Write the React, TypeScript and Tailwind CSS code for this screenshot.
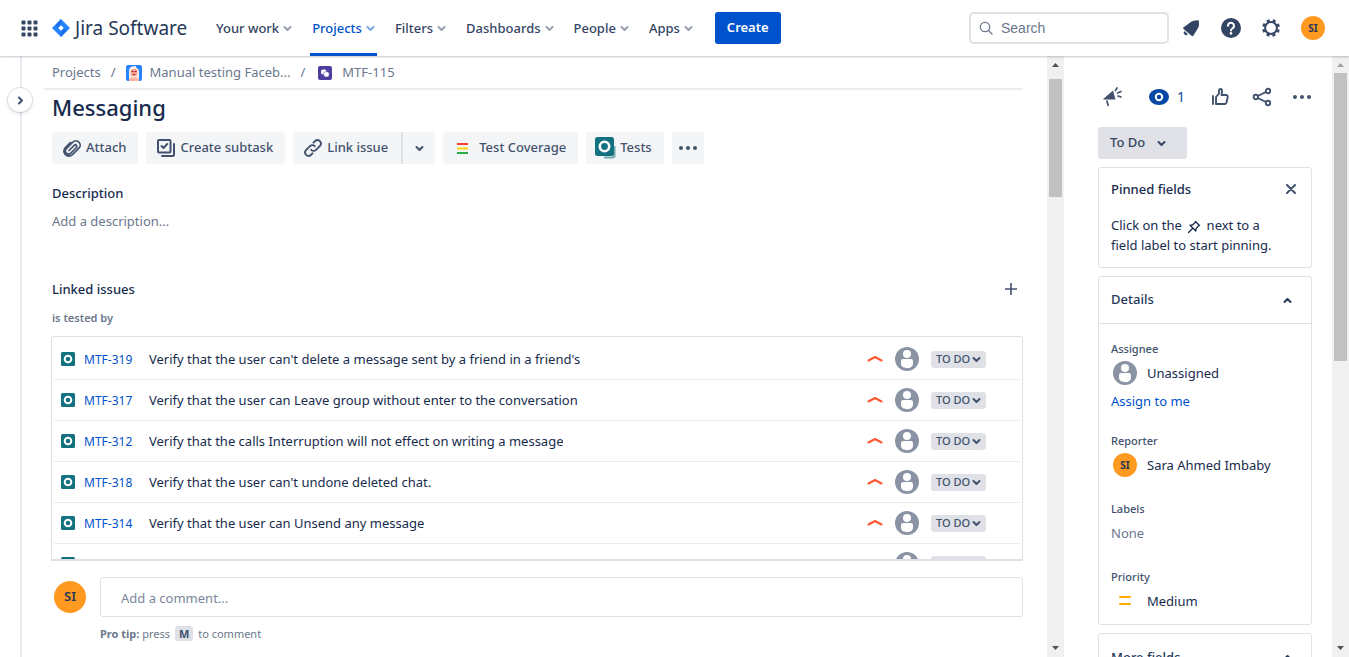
import type { ReactNode } from "react";

const navItems = ["Your work", "Projects", "Filters", "Dashboards", "People", "Apps"];

const linkedIssues = [
  { id: "MTF-319", title: "Verify that the user can't delete a message sent by a friend in a friend's" },
  { id: "MTF-317", title: "Verify that the user can Leave group without enter to the conversation" },
  { id: "MTF-312", title: "Verify that the calls Interruption will not effect on writing a message" },
  { id: "MTF-318", title: "Verify that the user can't undone deleted chat." },
  { id: "MTF-314", title: "Verify that the user can Unsend any message" },
  { id: "MTF-316", title: "" },
];

function Chevron({ className = "", dir = "down" }: { className?: string; dir?: "down" | "up" | "right" }) {
  const d = dir === "down" ? "M1.5 3l3 3 3-3" : dir === "up" ? "M1.5 6l3-3 3 3" : "M3 1.5l3 3-3 3";
  return (
    <svg className={`size-[9px] shrink-0 ${className}`} viewBox="0 0 9 9" fill="none" stroke="currentColor" strokeWidth="2" strokeLinecap="round" strokeLinejoin="round" aria-hidden="true">
      <path d={d} />
    </svg>
  );
}

function Person() {
  return (
    <svg className="size-6 shrink-0" viewBox="0 0 24 24" aria-hidden="true">
      <circle cx="12" cy="12" r="12" fill="#8993A4" />
      <circle cx="12" cy="7" r="4" fill="#fff" />
      <path d="M6 14.200a2.200 2.200 0 0 1 2.200-2.200h7.600a2.200 2.200 0 0 1 2.200 2.200v2.300c0 3-2.600 4.700-6 4.700s-6-1.700-6-4.700z" fill="#fff" />
    </svg>
  );
}

function TestIcon() {
  return (
    <svg className="size-[14px] shrink-0" viewBox="0 0 14 14" aria-hidden="true">
      <rect width="14" height="14" rx="1.500" fill="#14717F" />
      <circle cx="7" cy="7" r="3.300" fill="none" stroke="#fff" strokeWidth="2" />
    </svg>
  );
}

function Dots() {
  return (
    <svg className="h-4 w-5" viewBox="0 0 20 16" fill="currentColor" aria-hidden="true">
      <circle cx="3" cy="8" r="2" />
      <circle cx="10" cy="8" r="2" />
      <circle cx="17" cy="8" r="2" />
    </svg>
  );
}

function ScrollBar({ thumb, upColor }: { thumb: string; upColor: string }) {
  return (
    <div className="flex w-[17px] shrink-0 flex-col items-center bg-[#f0f0f0]" aria-hidden="true">
      <svg className={`size-[17px] ${upColor}`} viewBox="0 0 17 17" fill="currentColor"><path d="M5 11h7L8.500 7z" /></svg>
      <div className={`w-[13px] bg-[#c1c1c1] ${thumb}`} />
      <svg className="mt-auto size-[17px] text-[#505050]" viewBox="0 0 17 17" fill="currentColor"><path d="M5 6h7l-3.500 4z" /></svg>
    </div>
  );
}

function ActionButton({ children, className = "" }: { children: ReactNode; className?: string }) {
  return (
    <button type="button" className={`flex h-8 items-center rounded-[3px] bg-[#F4F5F7] text-[13px] font-medium text-[#42526E] ${className}`}>
      {children}
    </button>
  );
}

function Header() {
  return (
    <header className="relative z-10 flex h-14 shrink-0 items-center bg-white pr-6 pl-[21px] shadow-[0_1px_2px_rgba(9,30,66,0.25)]">
      <button type="button" aria-label="Switch to" className="text-[#344563]">
        <svg className="size-[17px]" viewBox="0 0 17 17" fill="currentColor">
          {[0, 6, 12].map((y) => [0, 6, 12].map((x) => <rect key={`${x}-${y}`} x={x + 0.5} y={y + 0.5} width="4" height="4" rx="1" />))}
        </svg>
      </button>
      <a href="#home" className="ml-[14px] flex w-[135px] items-center text-[19px] whitespace-nowrap text-[#253858]">
        <svg className="mr-[5px] size-[18px] shrink-0" viewBox="0 0 18 18" aria-hidden="true">
          <path d="M9 0l8.500 8.400a.9.9 0 0 1 0 1.200L9 18 .5 9.600a.9.900 0 0 1 0-1.200z" fill="#2684FF" />
          <path d="M9 0v6L6 9 3.500 6z" fill="#1261D8" opacity=".6" />
          <path d="M9 18v-6l3-3 2.500 3z" fill="#1261D8" opacity=".6" />
          <path d="M9 6.200L11.800 9 9 11.800 6.200 9z" fill="#fff" />
        </svg>
        Jira Software
      </a>
      <nav className="ml-[19px] flex h-full">
        {navItems.map((item) => {
          const active = item === "Projects";
          return (
            <button
              key={item}
              type="button"
              className={`mx-2 flex h-full items-center gap-1 border-b-[3px] px-[2px] pt-1 text-[13px] font-medium whitespace-nowrap ${active ? "border-[#0052CC] text-[#0052CC]" : "border-transparent text-[#344563]"}`}
            >
              {item}
              <Chevron className="opacity-50" />
            </button>
          );
        })}
      </nav>
      <button type="button" className="ml-3 h-8 rounded-[3px] bg-[#0052CC] px-3 text-[13px] font-semibold text-white">Create</button>
      <label className="ml-auto flex h-8 w-[200px] items-center gap-2 rounded-[5px] border-2 border-[#DFE1E6] px-2 text-[#6B778C]">
        <svg className="size-[14px] shrink-0" viewBox="0 0 14 14" fill="none" stroke="currentColor" strokeWidth="1.300" strokeLinecap="round" aria-hidden="true">
          <circle cx="6" cy="6" r="4.700" />
          <path d="M9.500 9.500L13 13" />
        </svg>
        <input aria-label="Search" placeholder="Search" className="w-full min-w-0 font-['Liberation_Sans',sans-serif] text-sm outline-none placeholder:text-[#6B778C]" />
      </label>
      <div className="ml-[10px] flex items-center gap-4 text-[#344563]">
        <button type="button" aria-label="Notifications" className="flex size-6 items-center justify-center">
          <svg className="size-[18px]" viewBox="0 0 18 18" fill="currentColor">
            <path d="M16.900 2.200c0-.7-.4-1.100-1.100-1l-3 .2c-1.400.1-2.500.5-3.600 1.300L1.700 8.300c-.9.600-.8 1.200-.1 1.700l8.200 7c.7.500 1.300.4 1.600-.5l4.600-7.300c.7-1.100 1-2.200 1-3.600z" />
            <path d="M2.300 12a2.300 2.300 0 0 0 3.600 3.200z" />
          </svg>
        </button>
        <button type="button" aria-label="Help" className="flex size-6 items-center justify-center">
          <svg className="size-5" viewBox="0 0 20 20">
            <circle cx="10" cy="10" r="10" fill="currentColor" />
            <path d="M7 7.800a3 3 0 1 1 4.700 2.400c-1.100.8-1.700 1.200-1.700 2.400" fill="none" stroke="#fff" strokeWidth="2" strokeLinecap="round" />
            <circle cx="10" cy="15.400" r="1.300" fill="#fff" />
          </svg>
        </button>
        <button type="button" aria-label="Settings" className="flex size-6 items-center justify-center">
          <svg className="size-[18px]" viewBox="0 0 18 18" fill="none" stroke="currentColor">
            <circle cx="9" cy="9" r="5.900" strokeWidth="2" />
            <circle cx="9" cy="9" r="7.700" strokeWidth="2.400" strokeDasharray="3.024 3.024" strokeDashoffset="-1.500" />
          </svg>
        </button>
        <button type="button" aria-label="Your profile" className="ml-[2px] size-6 rounded-full bg-[#FF991F] text-[10px] font-bold text-[#253858]">SI</button>
      </div>
    </header>
  );
}

function Breadcrumbs() {
  return (
    <nav aria-label="Breadcrumbs" className="-ml-2 flex h-[34px] shrink-0 items-center border-b-2 border-[#EBECF0] pt-[2px] pl-2 text-[13px] text-[#6B778C]">
      <a href="#projects">Projects</a>
      <span className="mx-[10px]">/</span>
      <a href="#project" className="flex items-center gap-2">
        <svg className="size-4" viewBox="0 0 16 16" aria-hidden="true">
          <rect width="16" height="16" rx="2" fill="#2684FF" />
          <path d="M3 16V6a5 5 0 0 1 4-4.800L10 1v1.500A5 5 0 0 1 13 7v9z" fill="#FFEDE8" />
          <rect x="4.800" y="4" width="6.400" height="7.200" rx="2.500" fill="#FF9C8A" />
          <path d="M5.500 6.500h2M8.600 6.500h2M7 9.500h2" stroke="#8C3040" strokeWidth="1" />
          <path d="M3 16v-1.500C3 13 5 12.500 8 12.500s5 .5 5 2V16z" fill="#FFB3A2" />
        </svg>
        Manual testing Faceb...
      </a>
      <span className="mx-[10px]">/</span>
      <a href="#issue" className="ml-[3px] flex items-center gap-[10px]">
        <svg className="size-[14px]" viewBox="0 0 14 14" aria-hidden="true">
          <rect width="14" height="14" rx="2" fill="#4C3F9E" />
          <rect x="3" y="3.500" width="5.500" height="5" rx="2" fill="#fff" />
          <rect x="5.700" y="5.700" width="5.500" height="5.300" rx="2" fill="#fff" stroke="#4C3F9E" strokeWidth=".6" />
        </svg>
        MTF-115
      </a>
    </nav>
  );
}

function Actions() {
  return (
    <div className="mt-[10px] flex gap-2">
      <ActionButton className="gap-1 pr-3 pl-[10px]">
        <svg className="size-5" viewBox="0 0 20 20" fill="none" stroke="currentColor" strokeWidth="1.700" strokeLinecap="round" aria-hidden="true">
          <path d="M7 12.500l5.200-5.200a1.500 1.500 0 0 1 2.200 2.200l-5.600 5.600a3.100 3.100 0 0 1-4.500-4.500l6.500-6.500a4.300 4.300 0 0 1 6.100 6.100l-6.500 6.500c-2 2-5 2-7 0s-2-5 0-7l5-5" />
        </svg>
        Attach
      </ActionButton>
      <ActionButton className="gap-1 pr-3 pl-[10px]">
        <svg className="size-5" viewBox="0 0 20 20" fill="none" stroke="currentColor" strokeWidth="2" strokeLinecap="round" strokeLinejoin="round" aria-hidden="true">
          <rect x="2" y="2" width="12.500" height="12.500" rx="1" />
          <path d="M5.500 8l2 2 3.700-4M18 6v10.500a1.500 1.500 0 0 1-1.500 1.500H6" />
        </svg>
        Create subtask
      </ActionButton>
      <div className="flex">
        <ActionButton className="gap-1 rounded-r-none pr-[13px] pl-[10px]">
          <svg className="size-5" viewBox="0 0 20 20" fill="none" stroke="currentColor" strokeWidth="1.900" strokeLinecap="round" aria-hidden="true">
            <path d="M8.200 11.800a3.400 3.400 0 0 0 4.800 0l4-4a3.400 3.400 0 0 0-4.800-4.800l-1.700 1.700" />
            <path d="M11.800 8.200a3.400 3.400 0 0 0-4.800 0l-4 4a3.400 3.400 0 0 0 4.800 4.800l1.700-1.700" />
          </svg>
          Link issue
        </ActionButton>
        <button type="button" aria-label="Link options" className="flex h-8 w-[34px] items-center justify-center rounded-r-[3px] border-l-2 border-[#DFE1E6] bg-[#F4F5F7] text-[#42526E]">
          <Chevron />
        </button>
      </div>
      <ActionButton className="gap-2 px-3">
        <svg className="size-4" viewBox="0 0 16 16" aria-hidden="true">
          <path d="M2 3h11v2H2z" fill="#FF3B30" />
          <path d="M2 7.500h11v2H2z" fill="#FFD60A" />
          <path d="M2 12h11v2H2z" fill="#27AE46" />
        </svg>
        Test Coverage
      </ActionButton>
      <ActionButton className="gap-1 pr-3 pl-2">
        <svg className="size-[22px]" viewBox="0 0 22 22" aria-hidden="true">
          <path d="M10 20.500h8.500a2 2 0 0 0 2-2V9" fill="none" stroke="#71AAB1" strokeWidth="2" />
          <rect x="1" y="0" width="19" height="19" rx="2.500" fill="#14717F" />
          <circle cx="10.500" cy="9.500" r="4.700" fill="none" stroke="#fff" strokeWidth="2.600" />
        </svg>
        Tests
      </ActionButton>
      <ActionButton className="px-[6px]"><Dots /></ActionButton>
    </div>
  );
}

function IssueMain() {
  return (
    <main className="flex min-w-0 flex-1 flex-col pr-6 pl-[30px]">
      <Breadcrumbs />
      <h1 className="mt-[2px] text-[22px] leading-[30px] font-medium text-[#172B4D]">Messaging</h1>
      <Actions />
      <h2 className="mt-[19px] text-[13px] leading-5 font-medium text-[#172B4D]">Description</h2>
      <p className="mt-2 text-[13px] leading-5 text-[#6B778C]">Add a description...</p>
      <div className="mt-12 flex items-center justify-between">
        <h2 className="text-[13px] leading-5 font-medium text-[#172B4D]">Linked issues</h2>
        <button type="button" aria-label="Link an issue" className="mr-[6px] text-[#42526E]">
          <svg className="size-3" viewBox="0 0 12 12" stroke="currentColor" strokeWidth="1.600"><path d="M6 0v12M0 6h12" /></svg>
        </button>
      </div>
      <h3 className="mt-[11px] text-[11px] leading-4 font-semibold text-[#6B778C]">is tested by</h3>
      <ul className="-ml-px mt-[10px] flex min-h-0 flex-1 flex-col overflow-hidden rounded-t-[3px] border border-b-2 border-[#DFE1E6] px-[2px] pt-[2px]">
        {linkedIssues.map(({ id, title }) => (
          <li key={id} className="flex h-[41px] shrink-0 items-center border-b border-[#EBECF0] pr-[34px] pl-[7px]">
            <TestIcon />
            {title && (
              <>
                <a href={`#${id}`} className="ml-[9px] w-[65px] pt-px text-xs text-[#0052CC]">{id}</a>
                <a href={`#${id}`} className="min-w-0 truncate pt-[2px] text-[13px] text-[#172B4D]">{title}</a>
              </>
            )}
            <svg className="mr-3 ml-auto size-4 shrink-0" viewBox="0 0 16 16" fill="none" stroke="#FF5630" strokeWidth="2" strokeLinecap="round" strokeLinejoin="round" aria-label="High priority">
              <path d="M1.500 9.500L8 6l6.500 3.500" />
            </svg>
            <Person />
            <button type="button" aria-label="Change status" className="ml-3 flex h-[17px] w-[55px] shrink-0 items-center justify-center gap-[2px] rounded-[3px] bg-[#DFE1E6] text-[11px] font-medium whitespace-nowrap text-[#42526E]">
              {title && (
                <>
                  TO DO
                  <Chevron />
                </>
              )}
            </button>
          </li>
        ))}
      </ul>
      <form className="flex h-24 shrink-0 gap-[14px] pt-4 pl-[2px]">
        <span className="mt-1 flex size-8 shrink-0 items-center justify-center rounded-full bg-[#FF991F] text-[13px] font-semibold text-[#253858]">SI</span>
        <div className="flex-1">
          <input aria-label="Add a comment" placeholder="Add a comment..." className="block h-10 w-full rounded-[3px] border border-[#DFE1E6] px-5 pt-[2px] text-[13px] outline-none placeholder:text-[#7A869A]" />
          <p className="mt-2 text-[11px] leading-[18px] text-[#6B778C]">
            <b>Pro tip:</b> press <kbd className="mx-[2px] rounded-[3px] bg-[#DFE1E6] px-1 font-[inherit] font-bold text-[#42526E]">M</kbd> to comment
          </p>
        </div>
      </form>
    </main>
  );
}

function Field({ label, children }: { label: string; children: ReactNode }) {
  return (
    <div>
      <dt className="text-[11px] leading-4 font-medium text-[#42526E]">{label}</dt>
      <dd className="mt-1 text-[13px] leading-6 text-[#172B4D]">{children}</dd>
    </div>
  );
}

function Sidebar() {
  return (
    <aside className="flex w-[268px] shrink-0 flex-col overflow-hidden pt-[29px] pr-5 pl-[34px]">
      <div className="flex h-6 shrink-0 items-center pl-1 text-[#42526E]">
        <button type="button" aria-label="Give feedback">
          <svg className="size-5" viewBox="0 0 20 20" fill="currentColor" stroke="currentColor" strokeLinecap="round">
            <path d="M1 12.200L11 3.500l2.500 9H1.500z" stroke="none" />
            <path d="M5 14l1 4.300M13.500 3.500L15 1M15.500 6l3.500-1.500M16 9l3 1" strokeWidth="1.700" fill="none" />
          </svg>
        </button>
        <button type="button" aria-label="Watchers" className="ml-[27px] flex items-center gap-2 text-sm text-[#0747A6]">
          <svg className="h-5 w-5" viewBox="0 0 20 20">
            <ellipse cx="10" cy="10" rx="10" ry="8" fill="currentColor" />
            <circle cx="10" cy="10" r="3.200" fill="none" stroke="#fff" strokeWidth="2" />
          </svg>
          1
        </button>
        <button type="button" aria-label="Vote" className="ml-auto">
          <svg className="size-5" viewBox="0 0 20 20" fill="none" stroke="currentColor" strokeWidth="1.900" strokeLinecap="round" strokeLinejoin="round">
            <path d="M3 9v8M6 17V10l3-3.500V4.200C9 2.500 9.800 2 10.700 2s1.500 1 1.300 2.500L11.500 8H16a1.800 1.800 0 0 1 1.700 2.200l-1.200 5.300A2 2 0 0 1 14.500 17z" />
          </svg>
        </button>
        <button type="button" aria-label="Share" className="mx-[22px] mr-5">
          <svg className="size-5" viewBox="0 0 20 20" fill="none" stroke="currentColor" strokeWidth="1.900">
            <circle cx="3.800" cy="10" r="2.200" /><circle cx="16" cy="4" r="2.200" /><circle cx="16" cy="16" r="2.200" />
            <path d="M5.800 9L14 5M5.800 11L14 15" />
          </svg>
        </button>
        <button type="button" aria-label="Actions"><Dots /></button>
      </div>
      <button type="button" className="mt-[18px] flex h-8 w-[89px] shrink-0 items-center gap-3 rounded-[3px] bg-[#DFE1E6] px-3 text-[13px] font-medium text-[#344563]">
        To Do
        <Chevron />
      </button>
      <section className="mt-2 shrink-0 rounded-[3px] border border-[#DFE1E6] px-3 pt-[11px] pb-3 text-[#172B4D]">
        <div className="flex items-center justify-between">
          <h2 className="text-[13px] leading-5 font-medium">Pinned fields</h2>
          <button type="button" aria-label="Dismiss" className="mr-[3px] text-[#42526E]">
            <svg className="size-[10px]" viewBox="0 0 10 10" stroke="currentColor" strokeWidth="2" strokeLinecap="round"><path d="M1 1l8 8M9 1L1 9" /></svg>
          </button>
        </div>
        <p className="mt-4 text-[13px] leading-5">
          Click on the{" "}
          <svg className="mx-[2px] inline size-[14px]" viewBox="0 0 14 14" fill="none" stroke="currentColor" strokeWidth="1.300" strokeLinejoin="round" strokeLinecap="round" aria-label="pin">
            <path d="M8.500 1.500l4 4-1.200.5-2.300 2.800-.2 2.200L3 5.200l2.200-.2L8 2.700zM5.500 8.500L1.500 12.500" />
          </svg>{" "}
          next to a<br />field label to start pinning.
        </p>
      </section>
      <section className="mt-2 shrink-0 rounded-[3px] border border-[#DFE1E6]">
        <h2 className="flex h-[47px] items-center justify-between border-b border-[#DFE1E6] px-3 text-[13px] font-medium text-[#253858]">
          Details
          <button type="button" aria-label="Collapse details" className="mr-[7px]"><Chevron dir="up" /></button>
        </h2>
        <dl className="flex flex-col gap-6 px-3 pt-[17px] pb-[11px]">
          <Field label="Assignee">
            <span className="flex items-center gap-[10px] pl-[2px]"><Person />Unassigned</span>
            <a href="#assign" className="mt-2 block leading-4 text-[#0052CC]">Assign to me</a>
          </Field>
          <Field label="Reporter">
            <span className="flex items-center gap-[10px] pl-[2px]">
              <span className="flex size-6 items-center justify-center rounded-full bg-[#FF991F] text-[10px] font-bold text-[#253858]">SI</span>
              Sara Ahmed Imbaby
            </span>
          </Field>
          <Field label="Labels"><span className="text-[#6B778C]">None</span></Field>
          <Field label="Priority">
            <span className="flex items-center gap-[14px] pl-[6px]">
              <svg className="size-4" viewBox="0 0 16 16" stroke="#FFAB00" strokeWidth="2" strokeLinecap="round" aria-hidden="true"><path d="M3 4h10M3 11h10" /></svg>
              Medium
            </span>
          </Field>
        </dl>
      </section>
      <section className="mt-2 shrink-0 rounded-[3px] border border-[#DFE1E6]">
        <h2 className="flex h-[47px] items-center justify-between px-3 text-[13px] font-medium text-[#253858]">
          More fields
          <button type="button" aria-label="Collapse more fields" className="mr-[7px]"><Chevron dir="up" /></button>
        </h2>
      </section>
    </aside>
  );
}

export default function App() {
  return (
    <div className="flex h-screen flex-col overflow-hidden bg-white font-['Noto_Sans','Open_Sans',sans-serif]">
      <Header />
      <div className="flex min-h-0 flex-1">
        <div className="relative w-[22px] shrink-0 border-r-2 border-[#EBECF0]">
          <button type="button" aria-label="Expand sidebar" className="absolute top-8 left-2 flex size-6 items-center justify-center rounded-full bg-white text-[#42526E] shadow-[0_0_0_1px_rgba(9,30,66,0.1),0_2px_4px_rgba(9,30,66,0.12)]">
            <Chevron dir="right" />
          </button>
        </div>
        <IssueMain />
        <ScrollBar thumb="mt-[6px] h-[118px]" upColor="text-[#505050]" />
        <Sidebar />
        <ScrollBar thumb="h-72" upColor="text-[#a3a3a3]" />
      </div>
    </div>
  );
}
